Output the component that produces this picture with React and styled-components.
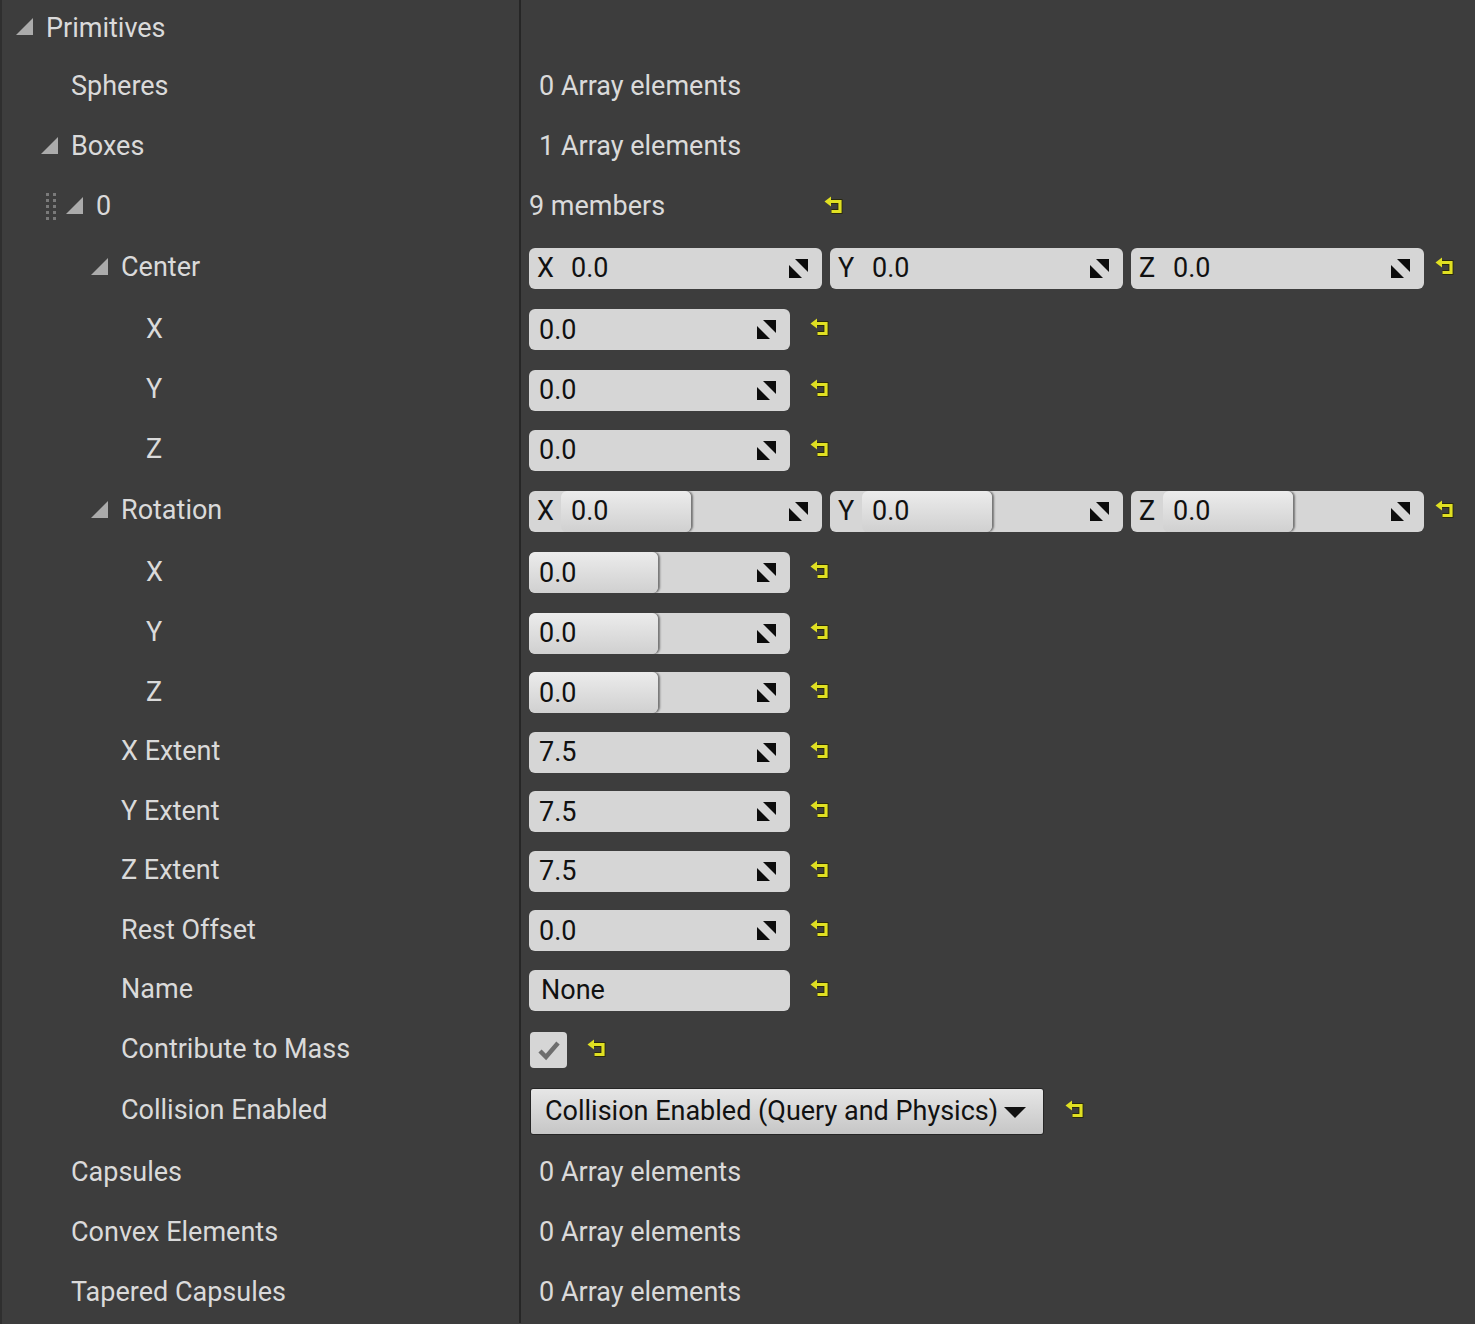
import React from 'react';
import styled, { createGlobalStyle } from 'styled-components';

const Global = createGlobalStyle`
  html, body {
    margin: 0;
    padding: 0;
    background: #3d3d3d;
  }
  body {
    font-family: Roboto, "Liberation Sans", sans-serif;
  }
`;

const Expander = () => (
  <svg width="17" height="17" viewBox="0 0 17 17">
    <polygon points="17,0 17,17 0,17" fill="#ababab" />
  </svg>
);

const SpinIcon = () => (
  <svg width="21" height="21" viewBox="0 0 21 21">
    <polygon points="7,1 20,1 20,14" fill="#0c0c0c" />
    <polygon points="1,7 1,20 14,20" fill="#0c0c0c" />
  </svg>
);

const ResetIcon = () => (
  <svg width="20" height="20" viewBox="0 0 20 20">
    <path d="M6 5.5 H16 V15.5 H7.5" fill="none" stroke="#2a2a0c" strokeWidth="5" />
    <path d="M6 5.5 H16 V15.5 H7.5" fill="none" stroke="#e0e022" strokeWidth="3.2" />
    <polygon points="0.5,5.5 7,0.5 7,10.5" fill="#e0e022" />
  </svg>
);

const CheckIcon = () => (
  <svg width="24" height="22" viewBox="0 0 24 22">
    <path d="M3 12 L9 18 L21 4" fill="none" stroke="#6e6e6e" strokeWidth="4.5" />
  </svg>
);

const Panel = styled.div`
  display: flex;
  flex-direction: column;
  min-height: 100vh;
  border-left: 2px solid #2f2f2f;
  background: #3d3d3d;
`;

const Row = styled.div`
  display: flex;
  height: ${p => p.$h}px;
`;

const NameCell = styled.div`
  display: flex;
  align-items: center;
  width: 519px;
  flex-shrink: 0;
  padding-left: ${p => 14 + p.$depth * 25}px;
  padding-bottom: 2px;
  box-sizing: border-box;
  border-right: 2px solid #262626;
  color: #dadada;
  font-size: 27px;
`;

const Gutter = styled.div`
  display: flex;
  align-items: center;
  width: 30px;
  flex-shrink: 0;
  padding-bottom: 2px;
  box-sizing: border-box;
`;

const Handle = styled.div`
  display: grid;
  grid-template-columns: repeat(2, 3px);
  gap: 3px 4px;
  margin-left: -20px;
  margin-right: 10px;
  width: 10px;
  flex-shrink: 0;

  span {
    width: 3px;
    height: 3px;
    background: #7a7a7a;
  }
`;

const ValueCell = styled.div`
  display: flex;
  align-items: center;
  padding-left: 8px;
  flex: 1;
`;

const Note = styled.span`
  color: #dadada;
  font-size: 27px;
  padding-left: ${p => p.$pad ?? 10}px;
  padding-bottom: 2px;
  width: ${p => (p.$w ? `${p.$w}px` : 'auto')};
  box-sizing: border-box;
`;

const Field = styled.div`
  position: relative;
  display: flex;
  align-items: center;
  width: ${p => p.$w}px;
  height: 41px;
  border-radius: 6px;
  background: #d6d6d6;
  color: #111;
  font-size: 27px;
  box-sizing: border-box;
  overflow: hidden;
  flex-shrink: 0;
`;

const AxisLabel = styled.span`
  width: 32px;
  padding-left: 8px;
  box-sizing: border-box;
  flex-shrink: 0;
`;

const Value = styled.span`
  padding-left: ${p => p.$pad}px;
`;

const Fill = styled.div`
  display: flex;
  align-items: center;
  align-self: stretch;
  width: ${p => p.$w}px;
  border-radius: 6px;
  background: linear-gradient(#ececec, #d0d0d0);
  box-shadow: 2px 0 2px rgba(0, 0, 0, 0.45);
`;

const Spin = styled.div`
  position: absolute;
  right: 13px;
  top: 10px;
  display: flex;
`;

const Reset = styled.div`
  display: flex;
  margin-left: ${p => p.$ml ?? 0}px;
  padding-bottom: 3px;
`;

const Vector = styled.div`
  display: flex;
  gap: 8px;
`;

const Check = styled.div`
  display: flex;
  align-items: center;
  justify-content: center;
  width: 37px;
  height: 36px;
  margin-left: 1px;
  border-radius: 4px;
  background: #d6d6d6;
`;

const Combo = styled.div`
  display: flex;
  align-items: center;
  gap: 6px;
  width: 514px;
  height: 47px;
  margin-left: 1px;
  padding-left: 14px;
  box-sizing: border-box;
  border: 1px solid #262626;
  border-radius: 3px;
  background: linear-gradient(#e6e6e6, #c6c6c6);
  color: #111;
  font-size: 27px;

  svg {
    margin-top: 2px;
  }
`;

const Name = ({ depth, expand, handle, children }) => (
  <NameCell $depth={depth}>
    {handle && (
      <Handle>
        {Array.from({ length: 10 }).map((_, i) => <span key={i} />)}
      </Handle>
    )}
    <Gutter>{expand && <Expander />}</Gutter>
    {children}
  </NameCell>
);

const NumField = ({ value, slider }) => (
  <Field $w={261}>
    {slider ? (
      <Fill $w={129}><Value $pad={10}>{value}</Value></Fill>
    ) : (
      <Value $pad={10}>{value}</Value>
    )}
    <Spin><SpinIcon /></Spin>
  </Field>
);

const AxisField = ({ axis, slider }) => (
  <Field $w={293}>
    <AxisLabel>{axis}</AxisLabel>
    {slider ? (
      <Fill $w={130}><Value $pad={10}>0.0</Value></Fill>
    ) : (
      <Value $pad={10}>0.0</Value>
    )}
    <Spin><SpinIcon /></Spin>
  </Field>
);

const VectorRow = ({ label, slider }) => (
  <Row $h={62}>
    <Name depth={3} expand>{label}</Name>
    <ValueCell>
      <Vector>
        {['X', 'Y', 'Z'].map(a => <AxisField key={a} axis={a} slider={slider} />)}
      </Vector>
      <Reset $ml={11}><ResetIcon /></Reset>
    </ValueCell>
  </Row>
);

const NumRow = ({ label, depth, value, slider, h }) => (
  <Row $h={h}>
    <Name depth={depth}>{label}</Name>
    <ValueCell>
      <NumField value={value} slider={slider} />
      <Reset $ml={20}><ResetIcon /></Reset>
    </ValueCell>
  </Row>
);

const ArrayRow = ({ label, count, h, depth = 1, expand }) => (
  <Row $h={h}>
    <Name depth={depth} expand={expand}>{label}</Name>
    <ValueCell>
      <Note>{count} Array elements</Note>
    </ValueCell>
  </Row>
);

const App = () => (
  <>
    <Global />
    <Panel>
      <Row $h={57}>
        <Name depth={0} expand>Primitives</Name>
        <ValueCell />
      </Row>
      <ArrayRow label="Spheres" count={0} h={60} />
      <ArrayRow label="Boxes" count={1} h={60} expand />
      <Row $h={60}>
        <Name depth={2} expand handle>0</Name>
        <ValueCell>
          <Note $pad={0} $w={295}>9 members</Note>
          <Reset><ResetIcon /></Reset>
        </ValueCell>
      </Row>
      <VectorRow label="Center" />
      <NumRow label="X" depth={4} value="0.0" h={61} />
      <NumRow label="Y" depth={4} value="0.0" h={60} />
      <NumRow label="Z" depth={4} value="0.0" h={60} />
      <VectorRow label="Rotation" slider />
      <NumRow label="X" depth={4} value="0.0" h={61} slider />
      <NumRow label="Y" depth={4} value="0.0" h={60} slider />
      <NumRow label="Z" depth={4} value="0.0" h={59} slider />
      <NumRow label="X Extent" depth={3} value="7.5" h={60} />
      <NumRow label="Y Extent" depth={3} value="7.5" h={59} />
      <NumRow label="Z Extent" depth={3} value="7.5" h={60} />
      <NumRow label="Rest Offset" depth={3} value="0.0" h={59} />
      <Row $h={60}>
        <Name depth={3}>Name</Name>
        <ValueCell>
          <Field $w={261}><Value $pad={12}>None</Value></Field>
          <Reset $ml={20}><ResetIcon /></Reset>
        </ValueCell>
      </Row>
      <Row $h={60}>
        <Name depth={3}>Contribute to Mass</Name>
        <ValueCell>
          <Check><CheckIcon /></Check>
          <Reset $ml={20}><ResetIcon /></Reset>
        </ValueCell>
      </Row>
      <Row $h={62}>
        <Name depth={3}>Collision Enabled</Name>
        <ValueCell>
          <Combo>
            Collision Enabled (Query and Physics)
            <svg width="22" height="11" viewBox="0 0 22 11">
              <polygon points="0,0 22,0 11,11" fill="#111" />
            </svg>
          </Combo>
          <Reset $ml={21}><ResetIcon /></Reset>
        </ValueCell>
      </Row>
      <ArrayRow label="Capsules" count={0} h={61} />
      <ArrayRow label="Convex Elements" count={0} h={60} />
      <ArrayRow label="Tapered Capsules" count={0} h={60} />
    </Panel>
  </>
);

export default App;
